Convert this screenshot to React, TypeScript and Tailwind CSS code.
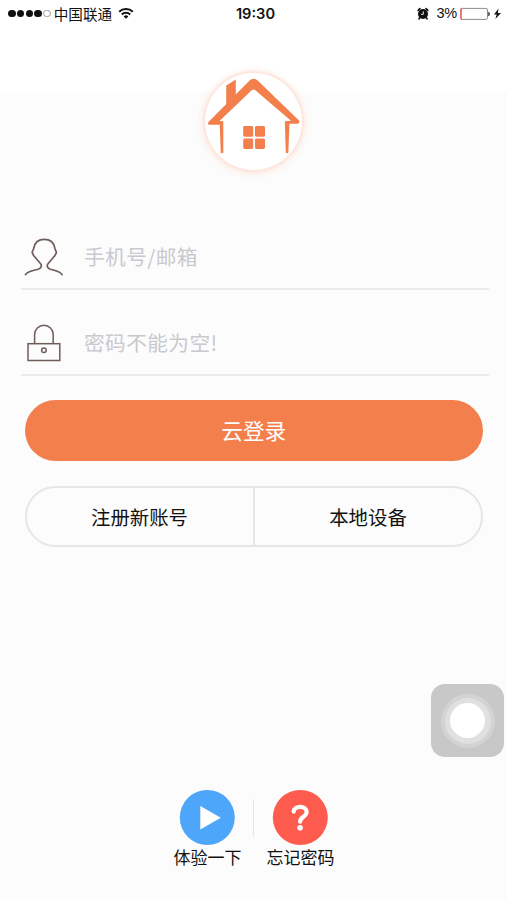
import React from "react";

const Wifi = () => (
  <svg width="16" height="12" viewBox="0 0 16 12" fill="none" stroke="#111" strokeWidth="2">
    <path d="M1.200 3.800a9.800 9.800 0 0 1 13.600 0" />
    <path d="M3.800 6.500a6 6 0 0 1 8.400 0" />
    <path d="M8 10.800 5.700 8.400a3.300 3.300 0 0 1 4.600 0z" fill="#111" stroke="none" />
  </svg>
);

const Alarm = () => (
  <svg width="12" height="13" viewBox="0 0 12 13">
    <circle cx="6" cy="7" r="5" fill="#111" />
    <path d="M1.200 3.300 2.900 1.700M10.800 3.300 9.100 1.700M2.600 11l-.6.8M9.400 11l.6.8" stroke="#111" strokeWidth="1.700" strokeLinecap="round" />
    <path d="M6.300 4.300V7.300H4" fill="none" stroke="#fff" strokeWidth=".9" />
  </svg>
);

const Battery = () => (
  <svg width="43" height="14" viewBox="0 0 43 14">
    <rect x=".9" y="1.400" width="26.600" height="11" rx="1.600" fill="#fff" stroke="#8c8c8c" />
    <path d="M2.200 1.400q-1.300 0-1.300 1.400v8.200q0 1.400 1.300 1.400" fill="none" stroke="#f0595c" strokeWidth="1.400" />
    <path d="M28.600 5q2 2 0 4z" fill="#333" stroke="#333" strokeWidth=".6" />
    <path d="M38.600 1.600 34 7.500h2.700l-1.300 4.600L41 6h-3.200z" fill="#111" />
  </svg>
);

const House = () => (
  <svg width="96" height="96" viewBox="0 0 96 96" fill="#f3804c">
    <path d="M21.200 12.500 30.800 6.500v16L21.200 32.500z" />
    <path d="M3.500 49 44.300 7.800q4.200-4 8.400-.2L93.500 47q2.400 3-1 3.700H84.500L83.300 80h-2.500L79.800 48.300 86 47.700 50 17.100q-1.500-1.100-3 0L14.500 48 18.300 48.300V80h-2.500L14.700 51.800H5q-3.200-.5-1.500-2.800z" />
    <rect x="38.200" y="53" width="10" height="10.700" rx="1.400" />
    <rect x="50" y="53" width="10" height="10.700" rx="1.400" />
    <rect x="38.200" y="65.500" width="10" height="10.500" rx="1.400" />
    <rect x="50" y="65.500" width="10" height="10.500" rx="1.400" />
  </svg>
);

const User = () => (
  <svg width="40" height="40" viewBox="0 0 40 40" fill="none" stroke="#6f5d59" strokeWidth="1.700" strokeLinejoin="round" strokeLinecap="round">
    <path d="M1.500 38.700C3.500 35 10 34.500 14.300 33.200c3.400-1.200 3.600-3.600 2.300-5.500L9.800 19.800C9 18 7.900 17 8.300 15.800c.4-1 1.300-2.200 1.500-3.800C10.800 6.500 14.500 3.300 20.300 3.300s9.500 3.200 10.500 8.700c.2 1.600 1.100 2.800 1.500 3.800.4 1.200-.7 2.200-1.500 4L24 27.700c-1.300 1.900-1.100 4.300 2.300 5.500 4.300 1.300 10 1.800 11.700 5.500" />
  </svg>
);

const Lock = () => (
  <svg width="40" height="40" viewBox="0 0 40 40" fill="none" stroke="#6f5d59" strokeWidth="1.500">
    <rect x="4" y="21.700" width="31.800" height="16.800" />
    <path d="M10.600 21.500V12.500a9.300 9.300 0 0 1 18.600 0v9" />
    <circle cx="19.900" cy="28.300" r="2.300" />
  </svg>
);

type FieldProps = { icon: React.ReactNode; text: string };

const Field = ({ icon, text }: FieldProps) => (
  <div className="flex h-full items-center border-b-2 border-[#ebebed] pl-[3px] text-[20.700px] tracking-[0.400px] text-[#c9c9ce]">
    <span className="w-[60px]">{icon}</span>
    <span className="pt-[2px]">{text}</span>
  </div>
);

const Shortcut = ({ icon, text }: FieldProps) => (
  <div className="flex w-[92px] flex-col items-center">
    {icon}
    <span className="-mt-px text-[17px] leading-[24px] text-[#111]">{text}</span>
  </div>
);

export default function App() {
  return (
    <main className="relative flex h-[900px] w-full flex-col overflow-hidden bg-[linear-gradient(#fff_92px,#fcfcfc_92px)] font-['Noto_Sans_CJK_SC',sans-serif]">
      <header className="grid h-[27px] shrink-0 grid-cols-[1fr_auto_1fr] items-center pr-[4px] pl-[8px] text-[#111]">
        <div className="flex items-center">
          <div className="flex gap-[1.300px]">
            <i className="size-[7.500px] rounded-full bg-[#111]" />
            <i className="size-[7.500px] rounded-full bg-[#111]" />
            <i className="size-[7.500px] rounded-full bg-[#111]" />
            <i className="size-[7.500px] rounded-full bg-[#111]" />
            <i className="size-[7.500px] rounded-full border border-[#999]" />
          </div>
          <span className="mr-[6px] ml-[3px] text-[14.600px] leading-[26px]">中国联通</span>
          <Wifi />
        </div>
        <span className="pt-[2px] font-[Inter,sans-serif] text-[14.600px] font-semibold">19:30</span>
        <div className="flex items-center justify-end">
          <Alarm />
          <span className="mr-[3px] ml-[7px] pt-px font-['Liberation_Sans',sans-serif] text-[14.500px] tracking-[-0.200px]">3%</span>
          <Battery />
        </div>
      </header>

      <div className="mt-[46px] ml-[205px] size-[97px] shrink-0 rounded-full bg-white shadow-[0_0_2px_2px_#fde5dc,0_1px_7px_3px_#fdebe4]">
        <House />
      </div>

      <section className="mt-[54px] ml-[21px] grid w-[468px] shrink-0 grid-rows-[66px_66px] gap-y-[20px]">
        <Field icon={<User />} text="手机号/邮箱" />
        <Field icon={<Lock />} text="密码不能为空!" />
      </section>

      <button className="mt-[24.400px] ml-[25px] h-[61px] w-[457.500px] shrink-0 rounded-full bg-[#f3804c] pb-px text-[21.600px] text-white">
        云登录
      </button>

      <div className="mt-[24.600px] ml-[25px] grid h-[61px] w-[458px] shrink-0 grid-cols-[228px_1fr] rounded-full border-2 border-[#e6e6e6] text-[19.400px] text-[#111]">
        <button className="border-r-2 border-[#e6e6e6] pr-px">注册新账号</button>
        <button>本地设备</button>
      </div>

      <div className="absolute top-[684px] left-[431px] flex size-[73px] items-center justify-center rounded-[14px] bg-[#c8c8c8]">
        <div className="flex size-[54px] items-center justify-center rounded-full bg-[#d3d3d3]">
          <div className="flex size-[46px] items-center justify-center rounded-full bg-[#e0e0e0]">
            <div className="size-[35px] rounded-full bg-white" />
          </div>
        </div>
      </div>

      <footer className="mt-[243px] ml-[161.400px] flex shrink-0">
        <Shortcut
          icon={
            <svg width="56" height="56" viewBox="0 0 56 56">
              <circle cx="28.300" cy="27.500" r="27.500" fill="#4ea6fb" />
              <path d="M21.300 16v23.500l20.500-11.800z" fill="#fff" />
            </svg>
          }
          text="体验一下"
        />
        <i className="mt-[9px] h-[38px] w-px bg-[#e6e6e6]" />
        <Shortcut
          icon={
            <svg width="56" height="56" viewBox="0 0 56 56">
              <circle cx="28.300" cy="27.500" r="27.500" fill="#fd5b4d" />
              <path d="M21.700 21.700c.4-6.400 12.900-6.600 12.900.300 0 4.700-6.500 4.800-6.500 9.700" fill="none" stroke="#fff" strokeWidth="4.200" strokeLinecap="round" />
              <circle cx="28.100" cy="37.700" r="2.800" fill="#fff" />
            </svg>
          }
          text="忘记密码"
        />
      </footer>
    </main>
  );
}
